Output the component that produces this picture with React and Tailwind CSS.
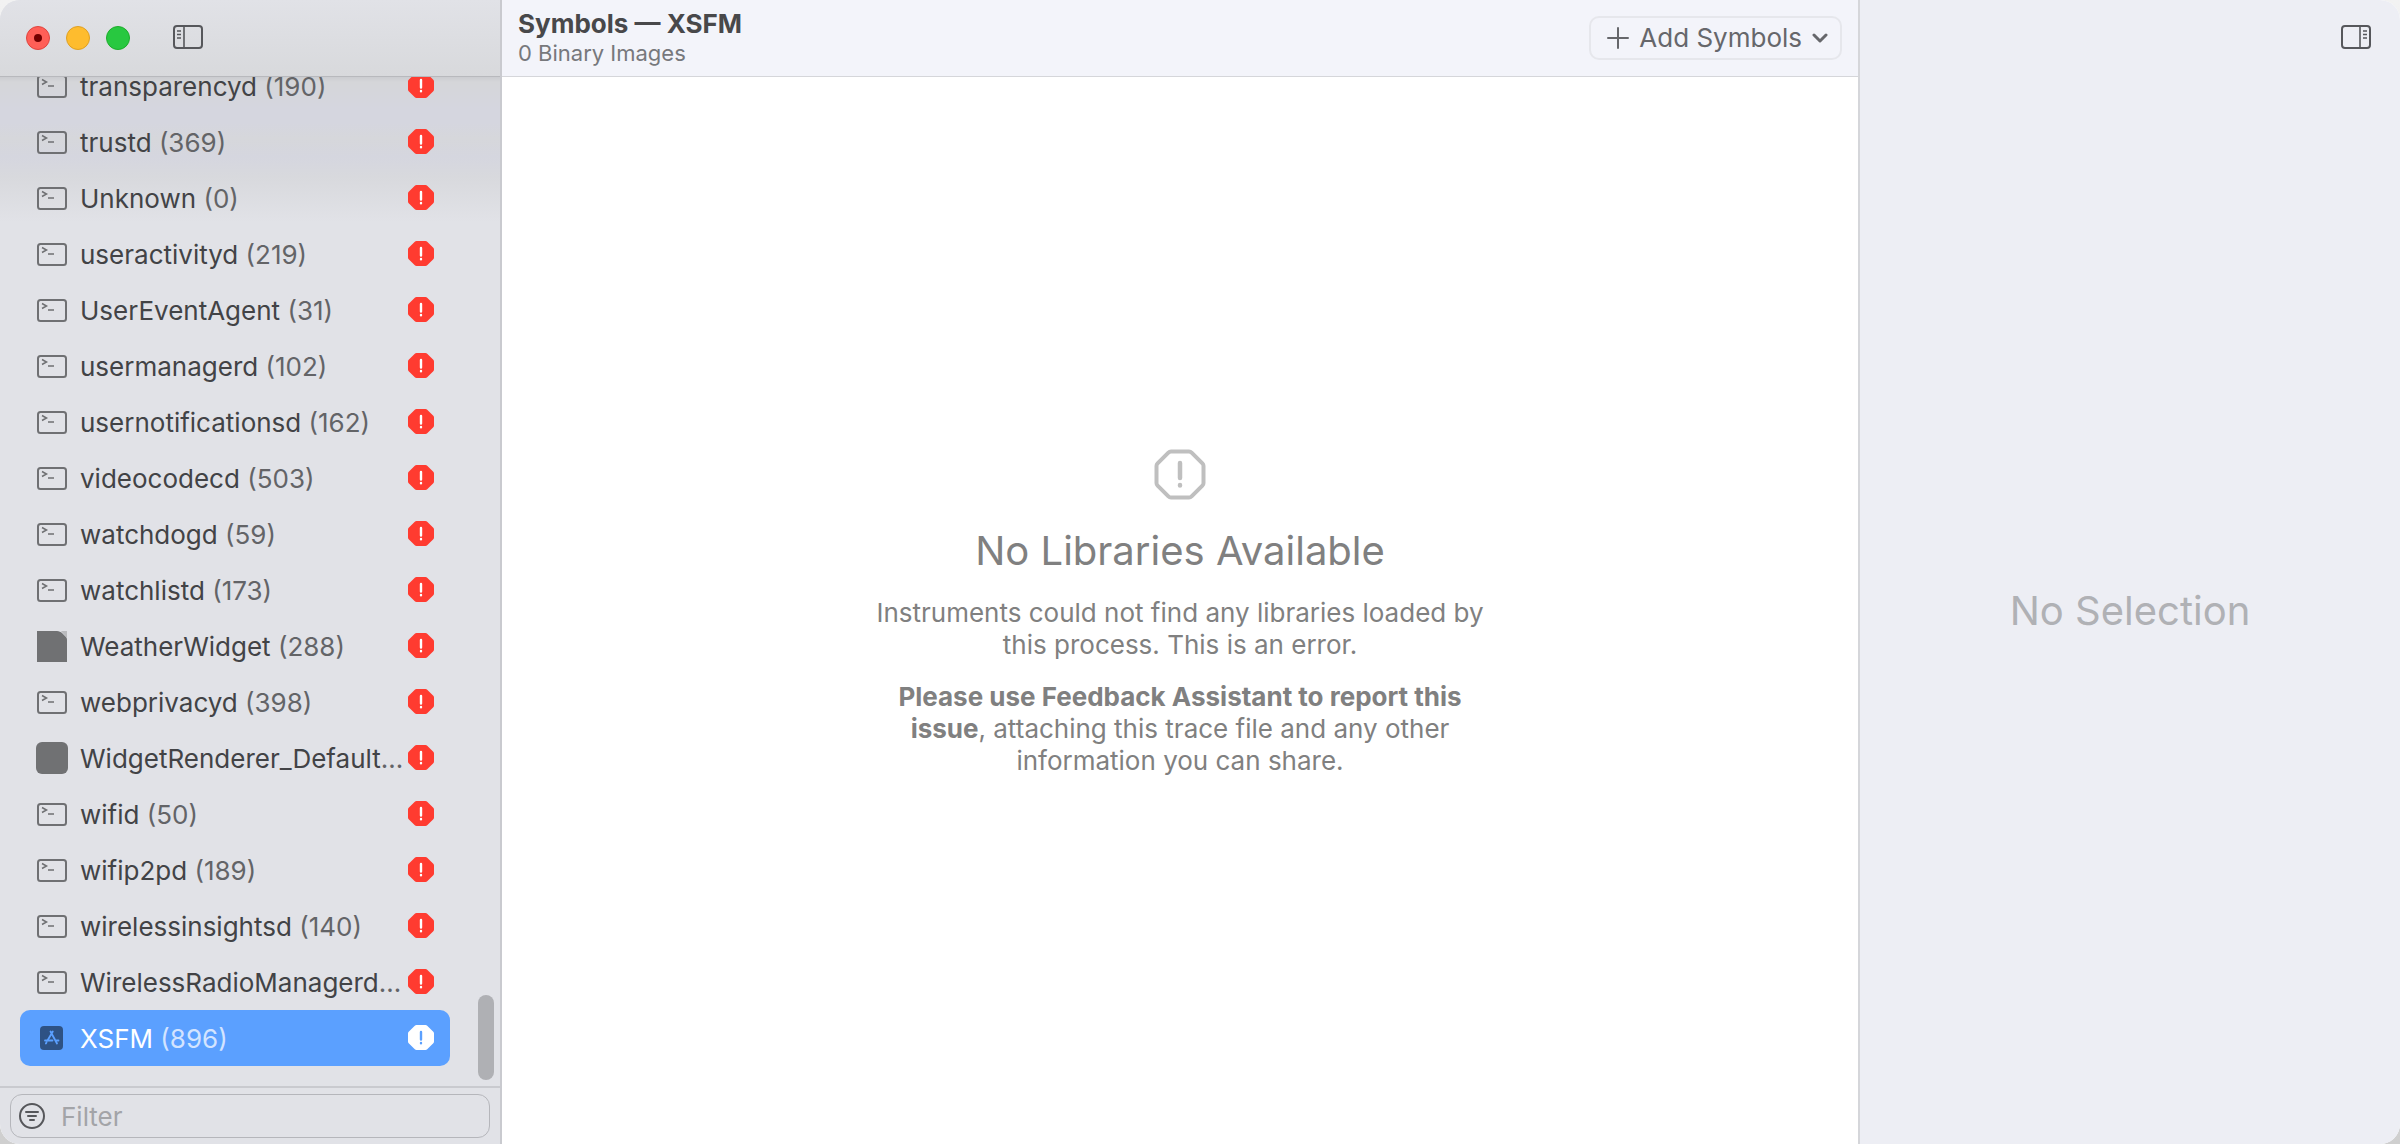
import { useState } from "react";

const processes = [
  { name: "transparencyd", pid: "(190)", icon: "terminal" },
  { name: "trustd", pid: "(369)", icon: "terminal" },
  { name: "Unknown", pid: "(0)", icon: "terminal" },
  { name: "useractivityd", pid: "(219)", icon: "terminal" },
  { name: "UserEventAgent", pid: "(31)", icon: "terminal" },
  { name: "usermanagerd", pid: "(102)", icon: "terminal" },
  { name: "usernotificationsd", pid: "(162)", icon: "terminal" },
  { name: "videocodecd", pid: "(503)", icon: "terminal" },
  { name: "watchdogd", pid: "(59)", icon: "terminal" },
  { name: "watchlistd", pid: "(173)", icon: "terminal" },
  { name: "WeatherWidget", pid: "(288)", icon: "document" },
  { name: "webprivacyd", pid: "(398)", icon: "terminal" },
  { name: "WidgetRenderer_Default", more: true, icon: "block" },
  { name: "wifid", pid: "(50)", icon: "terminal" },
  { name: "wifip2pd", pid: "(189)", icon: "terminal" },
  { name: "wirelessinsightsd", pid: "(140)", icon: "terminal" },
  { name: "WirelessRadioManagerd", more: true, icon: "terminal" },
  { name: "XSFM", pid: "(896)", icon: "app" },
];

function ProcessIcon({ type }) {
  if (type === "document") {
    return (
      <svg className="size-8" viewBox="0 0 32 32" aria-hidden="true">
        <path d="M1 1h20c2 0 4 1 5 2l4 4c1 1 1 2 1 4v21H1z" fill="#707173" />
        <path d="M25 1h6v7z" fill="#b9babd" />
      </svg>
    );
  }
  if (type === "block") {
    return <span className="block size-8 rounded-md bg-[#707173]" />;
  }
  if (type === "app") {
    return (
      <svg className="size-8" viewBox="0 0 32 32" fill="none" aria-hidden="true">
        <rect x="4" y="4" width="23" height="24" rx="4" fill="#2e5284" />
        <g stroke="#5ba0ff" strokeWidth="1.800" strokeLinecap="round">
          <path d="M16.800 9.500 11.500 18.500M14.500 9.500l6.500 12" />
          <path d="M9 18.500h7.500M20.500 18.500h2M10.500 20.500l-.6 1" />
        </g>
      </svg>
    );
  }
  return (
    <svg className="size-8" viewBox="0 0 32 32" fill="none" stroke="#6f7073" aria-hidden="true">
      <rect x="2" y="6" width="28" height="21" rx="2.500" strokeWidth="2" />
      <path d="M6 9.500l4.500 2.500-4.500 2.500M12 16h6" strokeWidth="1.500" />
    </svg>
  );
}

function ErrorBadge({ selected }) {
  return (
    <svg className="size-[26px] shrink-0" viewBox="0 0 26 26" role="img" aria-label="Error">
      <path
        d="M8.500 0h9q1 0 1.700.7l6.100 6.100q.7.7.7 1.700v8q0 1-.7 1.700l-6.100 6.100q-.7.7-1.700.7h-9q-1 0-1.700-.7L.7 18.200Q0 17.500 0 16.500v-8q0-1 .7-1.700L6.800.7Q7.500 0 8.500 0z"
        fill={selected ? "#ffffff" : "#ff3b30"}
      />
      <path
        d="M13 7v7.500M13 18v.2"
        stroke={selected ? "#5ba0ff" : "#ffffff"}
        strokeWidth="2.400"
        strokeLinecap="round"
      />
    </svg>
  );
}

function PanelIcon({ right }) {
  return (
    <svg className="h-6 w-[30px]" viewBox="0 0 30 24" fill="none" stroke="#56575b" aria-hidden="true">
      <rect x="1" y="1" width="28" height="22" rx="3" strokeWidth="2" />
      {right ? (
        <path d="M19 1v22M22 6h4M22 9.500h4M22 13h4" strokeWidth="1.600" />
      ) : (
        <path d="M11 1v22M4 6h4M4 9.500h4M4 13h4" strokeWidth="1.600" />
      )}
    </svg>
  );
}

function App() {
  const [selected, setSelected] = useState("XSFM");
  const [filter, setFilter] = useState("");

  return (
    <div className="h-screen bg-linear-to-b from-[#f2f2f2] to-[#cfcfcf] font-['Inter','Liberation_Sans',sans-serif] text-[26px] leading-8">
      <div className="flex h-full overflow-hidden rounded-[20px] bg-white">
        {/* Process list */}
        <aside className="flex w-[502px] shrink-0 flex-col border-r-2 border-[#c9cacf] bg-[#e1e2e7]">
          <header className="flex h-[77px] shrink-0 items-center border-b border-[#b8b9bd] bg-linear-to-b from-[#e1e2e7] to-[#d8d9dc] pl-[26px]">
            <div className="flex gap-4">
              <button aria-label="Close" className="flex size-6 items-center justify-center rounded-full border border-[#e0443e] bg-[#ff5f57]">
                <span className="size-2 rounded-full bg-[#730000]" />
              </button>
              <button aria-label="Minimize" className="size-6 rounded-full border border-[#dfa023] bg-[#febc2e]" />
              <button aria-label="Zoom" className="size-6 rounded-full border border-[#1dad2b] bg-[#28c840]" />
            </div>
            <button aria-label="Toggle sidebar" className="ml-[43px] pb-0.5">
              <PanelIcon />
            </button>
          </header>

          <div className="relative min-h-0 flex-1 bg-[linear-gradient(#cbccd0_0px,#d5d6d9_5px,#d5d6df_32px,#d5d6df_46px,#d6d7db_62px,#d5d6df_80px,#d8d9dd_100px,#e1e2e7_145px)]">
            <ul className="flex h-full flex-col justify-end overflow-hidden pr-[50px] pb-5 pl-5">
              {processes.map((item) => {
                const active = item.name === selected;
                return (
                  <li key={item.name} className="shrink-0">
                    <button
                      onClick={() => setSelected(item.name)}
                      className={
                        active
                          ? "flex h-14 w-full items-center gap-3 rounded-[10px] bg-[#5ba0ff] px-4 text-left text-white"
                          : "flex h-14 w-full items-center gap-3 px-4 text-left text-[#424346]"
                      }
                    >
                      <span className="w-8 shrink-0">
                        <ProcessIcon type={item.icon} />
                      </span>
                      <span className="min-w-0 flex-1 pt-0.5 whitespace-nowrap">
                        {item.name}
                        <span className={active ? "text-[#d3e4ff]" : "text-[#636467]"}>
                          {item.more ? "…" : " " + item.pid}
                        </span>
                      </span>
                      <ErrorBadge selected={active} />
                    </button>
                  </li>
                );
              })}
            </ul>
            <div className="absolute right-1.5 bottom-1.5 h-[85px] w-4 rounded-full bg-[#afb0b4]" />
          </div>

          <footer className="shrink-0 border-t-2 border-[#c9cacf] px-2.5 py-1.5">
            <label className="flex h-11 items-center gap-4 rounded-xl border border-[#b5b6bb] pl-2">
              <svg className="size-[26px]" viewBox="0 0 26 26" fill="none" stroke="#56575b" strokeWidth="2" strokeLinecap="round" aria-hidden="true">
                <circle cx="13" cy="13" r="12" />
                <path d="M7 9h12M9 13h8M11 17h4" />
              </svg>
              <input
                type="text"
                aria-label="Filter"
                placeholder="Filter"
                value={filter}
                onChange={(e) => setFilter(e.target.value)}
                className="min-w-0 flex-1 bg-transparent pt-0.5 outline-none placeholder:text-[#a3a4a8]"
              />
            </label>
          </footer>
        </aside>

        {/* Symbols */}
        <main className="flex min-w-0 flex-1 flex-col">
          <header className="flex h-[77px] shrink-0 items-center justify-between border-b border-[#d5d6da] bg-[#f3f4fa] px-4">
            <div className="pt-0.5">
              <h1 className="leading-7 font-bold text-[#48484a]">Symbols — XSFM</h1>
              <p className="text-[22px] leading-[30px] text-[#77787c]">0 Binary Images</p>
            </div>
            <button className="flex h-11 items-center gap-2.5 rounded-[10px] border-2 border-[#e6e7ec] pr-3 pl-4 text-[#66676b]">
              <svg className="size-[22px]" viewBox="0 0 22 22" fill="none" stroke="currentColor" strokeWidth="2" strokeLinecap="round" aria-hidden="true">
                <path d="M11 1v20M1 11h20" />
              </svg>
              Add Symbols
              <svg className="h-3 w-4" viewBox="0 0 16 12" fill="none" stroke="currentColor" strokeWidth="3" strokeLinecap="round" strokeLinejoin="round" aria-hidden="true">
                <path d="M2 3l6 6 6-6" />
              </svg>
            </button>
          </header>

          <section className="flex flex-1 flex-col items-center justify-center pt-1 text-center text-[#808080]">
            <svg className="size-[52px]" viewBox="0 0 52 52" fill="none" stroke="#bfbfbf" strokeLinecap="round" strokeLinejoin="round" aria-hidden="true">
              <path d="M17 2.500h18q1.500 0 2.600 1.100l10.800 10.800q1.100 1.100 1.100 2.600v17q0 1.500-1.100 2.600L37.600 47.400q-1.100 1.100-2.600 1.100H17q-1.500 0-2.600-1.100L3.600 36.600Q2.500 35.500 2.500 34V17q0-1.500 1.100-2.600L14.400 3.600Q15.500 2.500 17 2.500z" strokeWidth="4" />
              <path d="M26 14v15M26 36v.5" strokeWidth="4.500" />
            </svg>
            <h2 className="mt-6 text-[40px] leading-[52px]">No Libraries Available</h2>
            <p className="mt-5 w-[620px]">
              Instruments could not find any libraries loaded by this process. This is an error.
            </p>
            <p className="mt-5 w-[600px]">
              <strong className="font-bold">Please use Feedback Assistant to report this issue</strong>, attaching this
              trace file and any other information you can share.
            </p>
          </section>
        </main>

        {/* Inspector */}
        <aside className="flex w-[542px] shrink-0 flex-col border-l-2 border-[#d5d6da] bg-[#edeef4]">
          <header className="flex h-[77px] shrink-0 items-center justify-end pr-[29px]">
            <button aria-label="Toggle inspector" className="pb-1">
              <PanelIcon right />
            </button>
          </header>
          <div className="flex flex-1 items-center justify-center text-[40px] leading-[52px] text-[#b0b1b5]">
            No Selection
          </div>
        </aside>
      </div>
    </div>
  );
}

export default App;
